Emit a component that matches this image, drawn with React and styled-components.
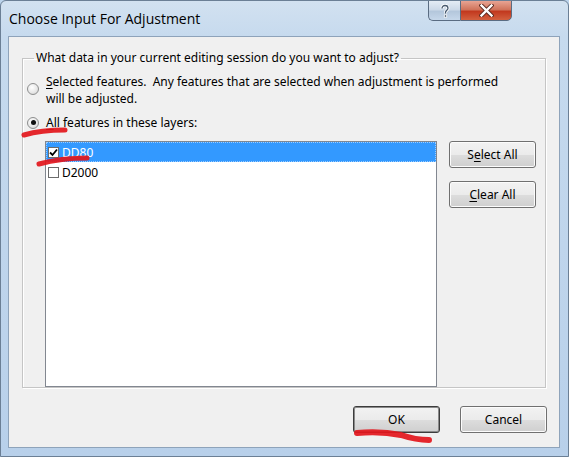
import React from 'react';
import styled, { createGlobalStyle, css } from 'styled-components';

const Global = createGlobalStyle`
  html, body {
    margin: 0;
    padding: 0;
    background: #bcd4ec;
  }
  body {
    font-family: "Noto Sans", "Liberation Sans", sans-serif;
  }
`;

const Window = styled.div`
  position: relative;
  width: 569px;
  height: 457px;
  box-sizing: border-box;
  display: flex;
  flex-direction: column;
  border: 1px solid #6b7f95;
  border-radius: 6px 6px 0 0;
  background: linear-gradient(to bottom, #d2e1f0 0px, #c6daee 36px, #b8d0ea 100%);
  overflow: hidden;
`;

const TitleBar = styled.div`
  height: 35px;
  display: flex;
  align-items: flex-start;
  justify-content: space-between;
  padding-left: 8px;
`;

const Title = styled.div`
  margin-top: 8px;
  font-family: "Open Sans", "Noto Sans", sans-serif;
  font-size: 14px;
  color: #000;
`;

const Caption = styled.div`
  display: flex;
  margin-right: 56px;
  margin-top: -1px;
`;

const CapButton = styled.div`
  height: 21px;
  display: flex;
  align-items: center;
  justify-content: center;
  border: 1px solid #5a6c82;
  box-sizing: border-box;
  ${p => p.$close ? css`
    width: 52px;
    border-radius: 0 0 5px 0;
    background: linear-gradient(to bottom, #e8a493 0%, #d0745c 45%, #c2391f 55%, #d3603f 100%);
  ` : css`
    width: 32px;
    border-radius: 0 0 0 5px;
    border-right: none;
    background: linear-gradient(to bottom, #e4ecf5 0%, #ccd9e8 45%, #b4c7dc 55%, #c6d7ea 100%);
  `}
`;

const Client = styled.div`
  flex: 1;
  margin: 0 8px 8px 7px;
  border: 1px solid #8ea3ba;
  background: #f0f0f0;
  display: flex;
  flex-direction: column;
  padding: 13px 13px 14px 13px;
  font-size: 12px;
  color: #000;
`;

const Group = styled.fieldset`
  margin: 0;
  padding: 4px 9px 10px 4px;
  border: 1px solid #c5c5c5;
  box-shadow: inset 1px 1px 0 #fff, 1px 1px 0 #fff;
  height: 338px;
  box-sizing: border-box;
  display: flex;
  flex-direction: column;
`;

const Legend = styled.legend`
  padding: 0 2px;
  margin-left: 7px;
  line-height: 16px;
`;

const Option = styled.label`
  display: flex;
  align-items: ${p => (p.$top ? 'center' : 'flex-start')};
  gap: 7px;
  margin-top: ${p => p.$mt || 0}px;
`;

const OptionText = styled.span`
  display: block;
  line-height: 17px;
`;

const Radio = styled.span`
  width: 12px;
  height: 12px;
  flex: none;
  border-radius: 50%;
  box-sizing: border-box;
  border: 1px solid #8e8f8f;
  background: radial-gradient(circle at 40% 35%, #ffffff 0%, #e6e6e6 60%, #c8c8c8 100%);
  display: flex;
  align-items: center;
  justify-content: center;
  margin-top: ${p => p.$mt || 0}px;
  &::after {
    content: '';
    width: 5px;
    height: 5px;
    border-radius: 50%;
    background: ${p => (p.$checked ? '#111' : 'transparent')};
  }
`;

const Key = styled.span`
  text-decoration: underline;
  text-underline-offset: 2px;
`;

const Body = styled.div`
  display: flex;
  gap: 12px;
  margin-top: 10px;
  margin-left: 18px;
  flex: 1;
`;

const List = styled.div`
  width: 392px;
  height: 246px;
  border: 1px solid #828790;
  background: #fff;
  box-sizing: border-box;
`;

const Row = styled.div`
  display: flex;
  align-items: center;
  gap: 3px;
  height: 18px;
  padding-left: 1px;
  color: ${p => (p.$sel ? '#fff' : '#000')};
  background: ${p => (p.$sel ? '#3399ff' : 'transparent')};
  border: 1px dotted ${p => (p.$sel ? '#9ccdff' : 'transparent')};
`;

const Check = styled.span`
  width: 11px;
  height: 11px;
  box-sizing: border-box;
  border: 1px solid #6d6d6d;
  background: #fff;
  display: flex;
  align-items: center;
  justify-content: center;
`;

const Side = styled.div`
  display: flex;
  flex-direction: column;
  gap: 13px;
`;

const Button = styled.button`
  width: ${p => p.$w || 87}px;
  height: 27px;
  box-sizing: border-box;
  font-family: inherit;
  font-size: 12px;
  color: #000;
  border: 1px solid ${p => (p.$default ? '#3c3c3c' : '#707070')};
  border-radius: 3px;
  box-shadow: inset 0 0 0 1px ${p => (p.$default ? '#8a8a8a' : '#fcfcfc')};
  background: linear-gradient(to bottom, #f2f2f2 0%, #ebebeb 50%, #dddddd 51%, #cfcfcf 100%);
  padding: 0;
`;

const Footer = styled.div`
  display: flex;
  justify-content: flex-end;
  gap: 20px;
  margin-top: auto;
  margin-right: -1px;
`;

const Marks = styled.svg`
  position: absolute;
  left: 0;
  top: 0;
  pointer-events: none;
`;

export default function App() {
  return (
    <>
      <Global />
      <Window>
        <TitleBar>
          <Title>Choose Input For Adjustment</Title>
          <Caption>
            <CapButton>
              <svg width="12" height="14" viewBox="0 0 12 14">
                <path d="M3 4.5C3 2.5 4.5 1.5 6 1.5S9 2.5 9 4.3C9 6.2 6.5 6.5 6.5 8.5V9.5" fill="none" stroke="#fff" strokeWidth="3" />
                <path d="M3 4.5C3 2.5 4.5 1.5 6 1.5S9 2.5 9 4.3C9 6.2 6.5 6.5 6.5 8.5V9.5" fill="none" stroke="#47596e" strokeWidth="1.3" />
                <rect x="5.3" y="10.8" width="2.4" height="2.4" fill="#47596e" stroke="#fff" strokeWidth="0.8" />
              </svg>
            </CapButton>
            <CapButton $close>
              <svg width="15" height="13" viewBox="0 0 15 13">
                <path d="M2.5 1.5L12.5 11.5M12.5 1.5L2.5 11.5" stroke="#5b2a20" strokeWidth="4.2" strokeLinecap="square" />
                <path d="M2.5 1.5L12.5 11.5M12.5 1.5L2.5 11.5" stroke="#fff" strokeWidth="2.4" strokeLinecap="square" />
              </svg>
            </CapButton>
          </Caption>
        </TitleBar>
        <Client>
          <Group>
            <Legend>What data in your current editing session do you want to adjust?</Legend>
            <Option $mt={3}>
              <Radio $mt={10} />
              <OptionText>
                <Key>S</Key>elected features.&nbsp; Any features that are selected when adjustment is performed
                <br />
                will be adjusted.
              </OptionText>
            </Option>
            <Option $top $mt={7}>
              <Radio $checked />
              <OptionText><Key>A</Key>ll features in these layers:</OptionText>
            </Option>
            <Body>
              <List>
                <Row $sel>
                  <Check>
                    <svg width="9" height="9" viewBox="0 0 9 9">
                      <path d="M1 4.5L3.5 7L8 1.5" fill="none" stroke="#000" strokeWidth="1.8" />
                    </svg>
                  </Check>
                  <span>DD80</span>
                </Row>
                <Row>
                  <Check />
                  <span>D2000</span>
                </Row>
              </List>
              <Side>
                <Button>S<Key>e</Key>lect All</Button>
                <Button><Key>C</Key>lear All</Button>
              </Side>
            </Body>
          </Group>
          <Footer>
            <Button $default>OK</Button>
            <Button>Cancel</Button>
          </Footer>
        </Client>
        <Marks width="569" height="457" viewBox="0 0 569 457">
          <g fill="none" stroke="#e3161c" strokeLinecap="round" opacity="0.92">
            <path d="M23 134Q40 129 64 129" strokeWidth="5" />
            <path d="M38 163Q60 157 86 157" strokeWidth="5" />
            <path d="M356 432Q380 430 400 434Q415 439 428 439" strokeWidth="6" />
          </g>
        </Marks>
      </Window>
    </>
  );
}
